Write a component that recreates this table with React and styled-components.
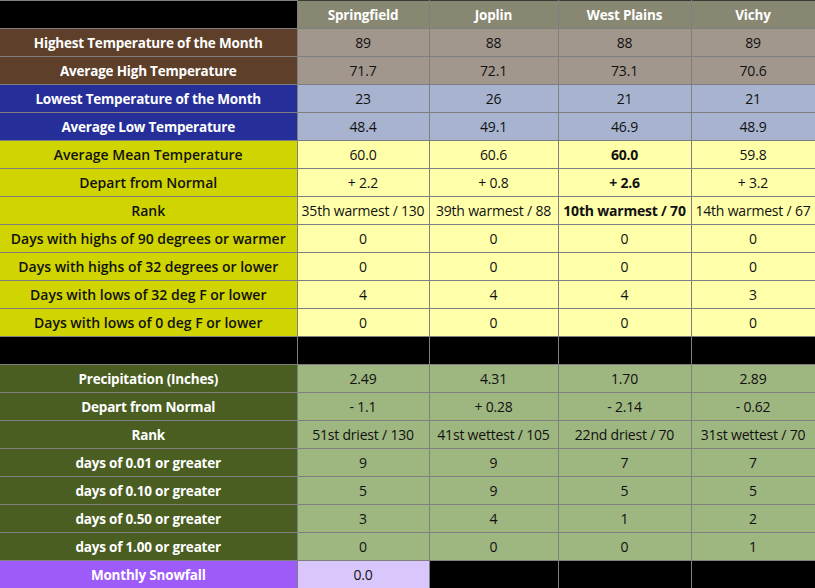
import React from "react";
import styled, { createGlobalStyle } from "styled-components";

const GlobalStyle = createGlobalStyle`
  html, body {
    margin: 0;
    padding: 0;
    background: #000;
  }
  body {
    font-family: "Open Sans", "Noto Sans", sans-serif;
  }
`;

const palette = {
  head: { label: "#000000", cell: "#878772", text: "#ffffff" },
  brown: { label: "#5e3f2a", cell: "#a2978d", text: "#ffffff" },
  blue: { label: "#262f99", cell: "#a8b4cf", text: "#ffffff" },
  yellow: { label: "#d0d400", cell: "#ffffaa", text: "#111111" },
  blank: { label: "#000000", cell: "#000000", text: "#ffffff" },
  green: { label: "#4a5e22", cell: "#9eb67f", text: "#ffffff" },
  purple: { label: "#9d5cfa", cell: "#d9c6fb", text: "#ffffff" },
};

const rows = [
  { group: "brown", label: "Highest Temperature of the Month", values: ["89", "88", "88", "89"] },
  { group: "brown", label: "Average High Temperature", values: ["71.7", "72.1", "73.1", "70.6"] },
  { group: "blue", label: "Lowest Temperature of the Month", values: ["23", "26", "21", "21"] },
  { group: "blue", label: "Average Low Temperature", values: ["48.4", "49.1", "46.9", "48.9"] },
  { group: "yellow", label: "Average Mean Temperature", values: ["60.0", "60.6", "60.0", "59.8"], bold: 2 },
  { group: "yellow", label: "Depart from Normal", values: ["+ 2.2", "+ 0.8", "+ 2.6", "+ 3.2"], bold: 2 },
  { group: "yellow", label: "Rank", values: ["35th warmest / 130", "39th warmest / 88", "10th warmest / 70", "14th warmest / 67"], bold: 2 },
  { group: "yellow", label: "Days with highs of 90 degrees or warmer", values: ["0", "0", "0", "0"] },
  { group: "yellow", label: "Days with highs of 32 degrees or lower", values: ["0", "0", "0", "0"] },
  { group: "yellow", label: "Days with lows of 32 deg F or lower", values: ["4", "4", "4", "3"] },
  { group: "yellow", label: "Days with lows of 0 deg F or lower", values: ["0", "0", "0", "0"] },
  { group: "blank", label: "", values: ["", "", "", ""] },
  { group: "green", label: "Precipitation (Inches)", values: ["2.49", "4.31", "1.70", "2.89"] },
  { group: "green", label: "Depart from Normal", values: ["- 1.1", "+ 0.28", "- 2.14", "- 0.62"] },
  { group: "green", label: "Rank", values: ["51st driest / 130", "41st wettest / 105", "22nd driest / 70", "31st wettest / 70"] },
  { group: "green", label: "days of 0.01 or greater", values: ["9", "9", "7", "7"] },
  { group: "green", label: "days of 0.10 or greater", values: ["5", "9", "5", "5"] },
  { group: "green", label: "days of 0.50 or greater", values: ["3", "4", "1", "2"] },
  { group: "green", label: "days of 1.00 or greater", values: ["0", "0", "0", "1"] },
  { group: "purple", label: "Monthly Snowfall", values: ["0.0", null, null, null] },
];

const cities = ["Springfield", "Joplin", "West Plains", "Vichy"];

const Table = styled.table`
  width: 815px;
  border-collapse: collapse;
  table-layout: fixed;
  border-top: 1px solid #3a3a3a;
`;

const Col = styled.col`
  width: ${(p) => p.$w}px;
`;

const Row = styled.tr`
  height: 28px;
`;

const Label = styled.th`
  background: ${(p) => palette[p.$group].label};
  color: ${(p) => palette[p.$group].text};
  font-size: ${(p) => (p.$group === "yellow" ? "14px" : "13.5px")};
  font-weight: ${(p) => (p.$group === "yellow" ? 600 : 700)};
  text-align: center;
  padding: 0 4px;
  border: 1px solid #7f7f7f;
  border-left: none;
  white-space: nowrap;
  letter-spacing: ${(p) => (p.$group === "yellow" ? "0" : "-0.2px")};
`;

const HeadCell = styled.th`
  background: ${palette.head.cell};
  color: #ffffff;
  font-size: 13.5px;
  font-weight: 700;
  text-align: center;
  border: 1px solid #7f7f7f;
  border-top: none;
  letter-spacing: -0.2px;
`;

const Cell = styled.td`
  background: ${(p) => (p.$empty ? "#000" : palette[p.$group].cell)};
  color: #111;
  font-size: 14px;
  font-weight: ${(p) => (p.$bold ? 700 : 400)};
  text-align: center;
  padding: 0 2px;
  border: 1px solid #7f7f7f;
  white-space: nowrap;
  letter-spacing: -0.2px;
`;

export default function App() {
  return (
    <>
      <GlobalStyle />
      <Table>
        <colgroup>
          <Col $w={297} />
          <Col $w={132} />
          <Col $w={129} />
          <Col $w={133} />
          <Col $w={124} />
        </colgroup>
        <thead>
          <Row>
            <Label $group="head" />
            {cities.map((c) => (
              <HeadCell key={c}>{c}</HeadCell>
            ))}
          </Row>
        </thead>
        <tbody>
          {rows.map((r, i) => (
            <Row key={i}>
              <Label $group={r.group}>{r.label}</Label>
              {r.values.map((v, j) => (
                <Cell key={j} $group={r.group} $empty={v === null} $bold={r.bold === j}>
                  {v}
                </Cell>
              ))}
            </Row>
          ))}
        </tbody>
      </Table>
    </>
  );
}
